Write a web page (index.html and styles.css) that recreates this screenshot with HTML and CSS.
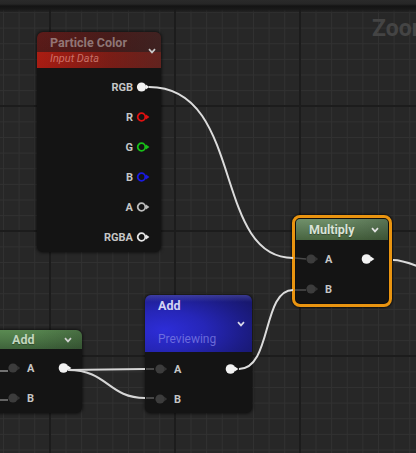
FILE: index.html
```html
<!DOCTYPE html>
<html>
<head>
<meta charset="utf-8">
<link rel="stylesheet" href="styles.css">
</head>
<body>
<div class="graph">
  <div class="topbar"></div>
  <div class="zoom-label">Zoom</div>

  <!-- Particle Color -->
  <div class="node node-particle">
    <div class="head head-particle">
      <div class="head-text">
        <div class="title">Particle Color</div>
        <div class="subtitle">Input Data</div>
      </div>
      <svg class="chev" width="8" height="6" viewBox="0 0 8 6"><path d="M1 1.2 L4 4.4 L7 1.2" fill="none" stroke="#c9c9c9" stroke-width="1.7"/></svg>
    </div>
    <div class="body body-particle">
      <div class="row out"><span class="lbl">RGB</span><svg class="pin" width="15" height="12" viewBox="0 0 15 12"><circle cx="5.5" cy="6" r="4.6" fill="#f2f2f2"/><path d="M9.8 3.4 L13.4 6 L9.8 8.6Z" fill="#f2f2f2"/></svg></div>
      <div class="row out"><span class="lbl">R</span><svg class="pin" width="15" height="12" viewBox="0 0 15 12"><circle cx="5.5" cy="6" r="3.8" fill="none" stroke="#e01010" stroke-width="1.8"/><path d="M10 3.6 L13.4 6 L10 8.4Z" fill="#e01010"/></svg></div>
      <div class="row out"><span class="lbl">G</span><svg class="pin" width="15" height="12" viewBox="0 0 15 12"><circle cx="5.5" cy="6" r="3.8" fill="none" stroke="#18c018" stroke-width="1.8"/><path d="M10 3.6 L13.4 6 L10 8.4Z" fill="#18c018"/></svg></div>
      <div class="row out"><span class="lbl">B</span><svg class="pin" width="15" height="12" viewBox="0 0 15 12"><circle cx="5.5" cy="6" r="3.8" fill="none" stroke="#1a1ae0" stroke-width="1.8"/><path d="M10 3.6 L13.4 6 L10 8.4Z" fill="#1a1ae0"/></svg></div>
      <div class="row out"><span class="lbl">A</span><svg class="pin" width="15" height="12" viewBox="0 0 15 12"><circle cx="5.5" cy="6" r="3.8" fill="none" stroke="#bdbdbd" stroke-width="1.8"/><path d="M10 3.6 L13.4 6 L10 8.4Z" fill="#bdbdbd"/></svg></div>
      <div class="row out"><span class="lbl">RGBA</span><svg class="pin" width="15" height="12" viewBox="0 0 15 12"><circle cx="5.5" cy="6" r="3.8" fill="none" stroke="#e6e6e6" stroke-width="1.8"/><path d="M10 3.6 L13.4 6 L10 8.4Z" fill="#e6e6e6"/></svg></div>
    </div>
  </div>

  <!-- Multiply -->
  <div class="node node-multiply">
    <div class="head head-green head-multiply">
      <div class="title">Multiply</div>
      <svg class="chev" width="8" height="6" viewBox="0 0 8 6"><path d="M1 1.2 L4 4.4 L7 1.2" fill="none" stroke="#e2e2e2" stroke-width="1.7"/></svg>
    </div>
    <div class="body body-multiply">
      <div class="row split">
        <div class="in"><svg class="pin" width="14" height="12" viewBox="0 0 14 12"><circle cx="5" cy="6" r="4.6" fill="#3c3c3c"/><path d="M9 3.6 L12.2 6 L9 8.4Z" fill="#333"/></svg><span class="lbl">A</span></div>
        <svg class="pin" width="15" height="12" viewBox="0 0 15 12"><circle cx="5.5" cy="6" r="4.8" fill="#f2f2f2"/><path d="M9.8 3.4 L13.4 6 L9.8 8.6Z" fill="#f2f2f2"/></svg>
      </div>
      <div class="row">
        <div class="in"><svg class="pin" width="14" height="12" viewBox="0 0 14 12"><circle cx="5" cy="6" r="4.6" fill="#3c3c3c"/><path d="M9 3.6 L12.2 6 L9 8.4Z" fill="#333"/></svg><span class="lbl">B</span></div>
      </div>
    </div>
  </div>

  <!-- Add (previewing, blue) -->
  <div class="node node-addblue">
    <div class="head head-blue">
      <div class="head-text spread">
        <div class="title">Add</div>
        <div class="subtitle">Previewing</div>
      </div>
      <svg class="chev" width="8" height="6" viewBox="0 0 8 6"><path d="M1 1.2 L4 4.4 L7 1.2" fill="none" stroke="#d8d8e8" stroke-width="1.7"/></svg>
    </div>
    <div class="body body-addblue">
      <div class="row split">
        <div class="in"><svg class="pin" width="14" height="12" viewBox="0 0 14 12"><circle cx="5" cy="6" r="4.6" fill="#3c3c3c"/><path d="M9 3.6 L12.2 6 L9 8.4Z" fill="#333"/></svg><span class="lbl">A</span></div>
        <svg class="pin" width="15" height="12" viewBox="0 0 15 12"><circle cx="5.5" cy="6" r="4.8" fill="#f2f2f2"/><path d="M9.8 3.4 L13.4 6 L9.8 8.6Z" fill="#f2f2f2"/></svg>
      </div>
      <div class="row">
        <div class="in"><svg class="pin" width="14" height="12" viewBox="0 0 14 12"><circle cx="5" cy="6" r="4.6" fill="#3c3c3c"/><path d="M9 3.6 L12.2 6 L9 8.4Z" fill="#333"/></svg><span class="lbl">B</span></div>
      </div>
    </div>
  </div>

  <!-- Add (green, left) -->
  <div class="node node-addleft">
    <div class="head head-green head-addleft">
      <div class="title">Add</div>
      <svg class="chev" width="8" height="6" viewBox="0 0 8 6"><path d="M1 1.2 L4 4.4 L7 1.2" fill="none" stroke="#d0d0d0" stroke-width="1.7"/></svg>
    </div>
    <div class="body body-addleft">
      <div class="row split">
        <div class="in"><svg class="pin" width="14" height="12" viewBox="0 0 14 12"><circle cx="5" cy="6" r="4.6" fill="#3c3c3c"/><path d="M9 3.6 L12.2 6 L9 8.4Z" fill="#333"/></svg><span class="lbl">A</span></div>
        <svg class="pin" width="15" height="12" viewBox="0 0 15 12"><circle cx="5.5" cy="6" r="4.8" fill="#f2f2f2"/><path d="M9.8 3.4 L13.4 6 L9.8 8.6Z" fill="#f2f2f2"/></svg>
      </div>
      <div class="row">
        <div class="in"><svg class="pin" width="14" height="12" viewBox="0 0 14 12"><circle cx="5" cy="6" r="4.6" fill="#3c3c3c"/><path d="M9 3.6 L12.2 6 L9 8.4Z" fill="#333"/></svg><span class="lbl">B</span></div>
      </div>
    </div>
  </div>

  <svg class="wires" width="416" height="453" viewBox="0 0 416 453">
    <path d="M0 371 L8 371" stroke="#8a8a8a" stroke-width="1.6" fill="none"/>
    <path d="M0 400 L8 400" stroke="#777" stroke-width="1.6" fill="none"/>
    <path d="M146 369 L154 369" stroke="#555" stroke-width="1.6" fill="none"/>
    <path d="M146 398 L154 398" stroke="#555" stroke-width="1.6" fill="none"/>
    <path d="M295 258 L306 259" stroke="#4a4a4a" stroke-width="1.6" fill="none"/>
    <path d="M295 290 L306 290" stroke="#4a4a4a" stroke-width="1.6" fill="none"/>
    <path d="M149 87 C 245 87 212 258 293 258" stroke="#dcdcdc" stroke-width="2" fill="none"/>
    <path d="M393 260 C 402 260 410 263 422 268" stroke="#dcdcdc" stroke-width="2" fill="none"/>
    <path d="M68 370 L 145 369" stroke="#d6d6d6" stroke-width="2" fill="none"/>
    <path d="M68 370 C 108 370 108 398 145 398" stroke="#d6d6d6" stroke-width="2" fill="none"/>
    <path d="M239 369 C 272 369 262 290 293 290" stroke="#dcdcdc" stroke-width="2" fill="none"/>
  </svg>
</div>
</body>
</html>
```

FILE: styles.css
```css
html, body {
  margin: 0;
  padding: 0;
  background: #262626;
}

.graph {
  position: relative;
  width: 416px;
  height: 453px;
  overflow: hidden;
  font-family: Roboto, "Noto Sans", "Liberation Sans", sans-serif;
  background-color: #272727;
  background-image:
    linear-gradient(to right, #1c1c1c 2px, transparent 2px),
    linear-gradient(to bottom, #1c1c1c 2px, transparent 2px),
    linear-gradient(to right, #313131 1px, transparent 1px),
    linear-gradient(to bottom, #313131 1px, transparent 1px);
  background-size: 125px 125px, 125px 125px, 15.625px 15.625px, 15.625px 15.625px;
  background-position: 49px 0, 0 105px, 3px 0, 0 12px;
}

.topbar {
  height: 13px;
  background: linear-gradient(to bottom, #2a2a2a 0, #262626 4px, #141414 6px, #181818 9px, rgba(24,24,24,0) 13px);
}

.zoom-label {
  position: absolute;
  left: 372px;
  top: 15px;
  font-size: 23px;
  font-weight: 700;
  color: #444;
  white-space: nowrap;
}

.node {
  position: absolute;
  display: flex;
  flex-direction: column;
  background: #141414;
  border-radius: 6px;
  box-shadow: 0 0 3px 1px rgba(0,0,0,0.55);
  overflow: hidden;
  color: #c9c9c9;
}

.head {
  display: flex;
  align-items: center;
  justify-content: space-between;
}

.head-text {
  display: flex;
  flex-direction: column;
}

.title {
  font-size: 12.5px;
  font-weight: 700;
  white-space: nowrap;
}

.subtitle {
  font-size: 11px;
  font-style: italic;
  white-space: nowrap;
}

.chev {
  display: block;
  flex: none;
}

.body {
  display: flex;
  flex-direction: column;
}

.row {
  height: 30px;
  display: flex;
  align-items: center;
}

.row.out {
  justify-content: flex-end;
  gap: 3px;
}

.row.split {
  justify-content: space-between;
}

.in {
  display: flex;
  align-items: center;
  gap: 5px;
}

.lbl {
  font-size: 11px;
  font-weight: 700;
  color: #c6c6c6;
}

.pin {
  display: block;
  flex: none;
}

/* Particle Color */
.node-particle {
  left: 37px;
  top: 32px;
  width: 124px;
  height: 220px;
}

.head-particle {
  height: 36px;
  padding: 0 5px 0 13px;
  background:
    linear-gradient(to right, rgba(0,0,0,0) 0%, rgba(30,30,30,0.35) 60%, rgba(40,40,40,0.55) 100%),
    linear-gradient(to bottom, #5e1b19 0, #561a18 20px, #ab1d12 20px, #a61c13 36px);
}

.head-particle .head-text {
  height: 36px;
}

.head-particle .title {
  height: 20px;
  line-height: 21px;
  color: rgba(190, 178, 178, 0.62);
}

.head-particle .subtitle {
  height: 16px;
  line-height: 14px;
  color: rgba(240, 170, 160, 0.6);
}

.head-particle .chev {
  margin-top: 2px;
}

.body-particle {
  padding: 4px 10px 0 0;
}

/* Multiply */
.node-multiply {
  left: 292px;
  top: 215px;
  width: 100px;
  height: 92px;
  box-sizing: border-box;
  border: 3px solid #e99410;
  border-radius: 8px;
  box-shadow: 0 0 2px 1px rgba(0,0,0,0.6), inset 0 0 0 1px #0f0f0f;
}

.head-green {
  height: 22px;
  background:
    linear-gradient(to right, rgba(0,0,0,0) 40%, rgba(20,30,20,0.25) 100%),
    linear-gradient(to bottom, #70906a 0%, #5c7a56 50%, #48643f 100%);
}

.head-multiply {
  padding: 0 9px 0 13px;
  margin: 1px 1px 0 1px;
  border-radius: 4px 4px 0 0;
}

.head-green .title {
  color: #d9e3d7;
  text-shadow: 0 1px 1px rgba(0,0,0,0.35);
}

.body-multiply {
  padding: 4px 13px 0 11px;
}

/* Add blue */
.node-addblue {
  left: 145px;
  top: 295px;
  width: 107px;
  height: 118px;
}

.head-blue {
  height: 57px;
  padding: 0 7px 0 13px;
  background:
    linear-gradient(to bottom, rgba(120,120,200,0.35) 0, rgba(120,120,200,0) 7px),
    radial-gradient(ellipse 95% 85% at 18% 62%, #2d2dd8 0%, #2626b8 40%, #1c1c86 80%, #181870 100%);
}

.head-blue .spread {
  height: 57px;
  justify-content: space-between;
  padding: 3px 0 6px;
  box-sizing: border-box;
}

.head-blue .title {
  color: #d2d2f2;
}

.head-blue .subtitle {
  font-style: normal;
  font-size: 12px;
  color: rgba(130, 130, 230, 0.75);
}

.head-blue .chev {
  margin-top: 1px;
}

.body-addblue {
  padding: 2px 12px 0 10px;
}

/* Add left green */
.node-addleft {
  left: -12px;
  top: 330px;
  width: 94px;
  height: 83px;
}

.head-addleft {
  padding: 0 10px 0 24px;
  background:
    linear-gradient(to right, rgba(0,0,0,0) 40%, rgba(20,30,20,0.25) 100%),
    linear-gradient(to bottom, #5a8a52 0%, #4d7847 50%, #3f633b 100%);
}

.head-addleft .title {
  color: #c2d6bf;
}

.body-addleft {
  padding: 4px 9px 0 20px;
}

.wires {
  position: absolute;
  left: 0;
  top: 0;
  pointer-events: none;
}
```
